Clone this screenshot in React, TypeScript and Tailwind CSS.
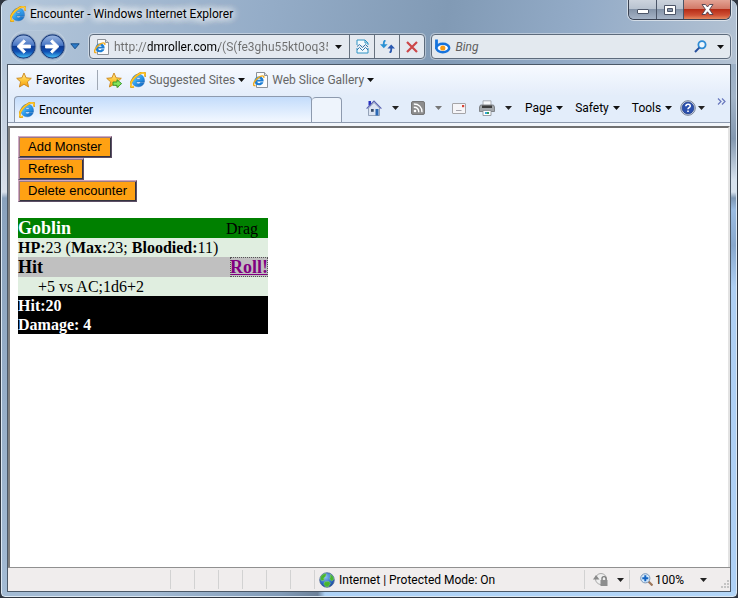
import type { ReactNode } from "react";

const ui = "font-[Roboto,'Open_Sans',sans-serif]";

function IeLogo({ size = 16 }: { size?: number }) {
  return (
    <svg width={size} height={size} viewBox="0 0 16 16" className="shrink-0" aria-hidden="true">
      <defs>
        <linearGradient id="ieBlue" x1="0" y1="0" x2="1" y2="1">
          <stop offset="0" stopColor="#8fe0fc" />
          <stop offset=".5" stopColor="#2b9cec" />
          <stop offset="1" stopColor="#0f5cb8" />
        </linearGradient>
      </defs>
      <path fillRule="evenodd" d="M14.500 9.900H6.400c.3 2.300 3.200 2.500 4 .7h3.900c-.9 2.900-3.500 4.200-6 4.200-3.800 0-6.300-2.500-6.300-6.200C2 5 4.600 2.300 8.300 2.300c4.200 0 6.600 3 6.200 7.600ZM10.500 7.300C10.300 5 6.700 5 6.400 7.300h4.100Z" fill="url(#ieBlue)" stroke="#1460b0" strokeWidth=".4" />
      <path d="M3.800 14.600C-.5 16.500-.4 11.700 3 7.200 6.600 2.500 12.600-.6 14.700 1c1 .8.700 2.200.2 3.600" fill="none" stroke="#d08f12" strokeWidth="2.200" />
      <path d="M3.800 14.500C-.3 16.100-.1 11.600 3.200 7.300 6.800 2.700 12.500-.3 14.500 1.200c.8.600.6 1.700.3 2.700" fill="none" stroke="#ffc928" strokeWidth="1.500" />
    </svg>
  );
}

function PageIcon() {
  return (
    <svg width="16" height="16" viewBox="0 0 16 16" className="shrink-0" aria-hidden="true">
      <path d="M3.500.5h8l3 3v12h-11Z" fill="#fcfcfc" stroke="#8c9299" />
      <path d="M11.500.5v3h3" fill="#ddd" stroke="#8c9299" />
      <path fillRule="evenodd" d="M10.600 9.500H4.300c.1 2 2.600 2.100 3.200.7h2.900c-.7 2.200-2.500 3.100-4.300 3.100-2.800 0-4.600-1.800-4.600-4.400 0-2.700 1.900-4.500 4.600-4.500 3 0 4.800 2 4.500 5.100ZM7.600 7.700C7.500 6.200 4.600 6.200 4.300 7.700Z" fill="#1d7ed4" />
      <path d="M2.500 13.500c-3 .8-2.400-2.400.1-5.200C5.200 5.200 9 3.100 10.500 4.200c.5.500.4 1 .2 1.700" fill="none" stroke="#efab1d" strokeWidth="1.400" />
    </svg>
  );
}

function Star({ add = false }: { add?: boolean }) {
  return (
    <svg width="16" height="16" viewBox="0 0 16 16" className="shrink-0" aria-hidden="true">
      <defs>
        <linearGradient id="starGold" x1="0" y1="0" x2="0" y2="1">
          <stop offset="0" stopColor="#ffe89a" />
          <stop offset=".5" stopColor="#ffc93a" />
          <stop offset="1" stopColor="#f39a12" />
        </linearGradient>
      </defs>
      <path d="m8 1 2.100 4.800 5.200.5-3.900 3.500 1.200 5.200L8 12.300 3.400 15l1.200-5.200L.7 6.300l5.200-.5Z" fill="url(#starGold)" stroke="#c98418" strokeWidth=".9" strokeLinejoin="round" />
      {add && <path d="M7 10h4V7.700l4.600 3.900-4.600 4V13.300H7Z" fill="#86e35c" stroke="#2c9224" strokeWidth=".9" />}
    </svg>
  );
}

function Caret({ color = "#111" }: { color?: string }) {
  return (
    <svg width="7" height="4" viewBox="0 0 7 4" className="shrink-0" aria-hidden="true">
      <path d="M0 0h7L3.500 4Z" fill={color} />
    </svg>
  );
}

function RoundArrow({ forward = false }: { forward?: boolean }) {
  return (
    <button type="button" aria-label={forward ? "Forward" : "Back"} className="shrink-0">
      <svg width="27" height="27" viewBox="0 0 27 27" className="block" aria-hidden="true">
        <defs>
          <linearGradient id="orbTop" x1="0" y1="0" x2="0" y2="1">
            <stop offset="0" stopColor="#9fb9e2" />
            <stop offset=".45" stopColor="#4675c4" />
            <stop offset=".5" stopColor="#0d3b94" />
            <stop offset=".72" stopColor="#1050b4" />
            <stop offset="1" stopColor="#49c6fb" />
          </linearGradient>
        </defs>
        <circle cx="13.500" cy="13.500" r="12.700" fill="#e3ecf6" stroke="#8095b3" strokeWidth=".8" />
        <circle cx="13.500" cy="13.500" r="11.600" fill="url(#orbTop)" stroke="#183b7c" strokeWidth="1.100" />
        <path
          d={forward ? "M6.500 12h8.200L11.500 8.500l1.700-1.700 6.800 6.700-6.800 6.700-1.700-1.700 3.200-3.500H6.500Z" : "M20.500 12h-8.200l3.200-3.500-1.700-1.700L7 13.500l6.800 6.700 1.700-1.700-3.200-3.500h8.200Z"}
          fill="#fff"
          stroke="#fff"
          strokeWidth=".8"
        />
      </svg>
    </button>
  );
}

function HomeIcon() {
  return (
    <svg width="16" height="16" viewBox="0 0 16 16" className="block" aria-hidden="true">
      <path d="M2.500 1h2.500v4.500H2.500Z" fill="#252fc0" />
      <path d="M2.500 8 8 2.500 13.500 8v7.500h-11Z" fill="#dce4f2" stroke="#8290a8" strokeWidth=".8" />
      <path d="M.6 8.700 8 1.200l7.400 7.500" fill="none" stroke="#5a62b0" strokeWidth="1.200" />
      <path d="M9.500 9h3v6.500h-3Z" fill="#2a68b5" />
      <path d="M5 9h2.700v2.800H5Z" fill="#394c68" />
    </svg>
  );
}

function RssIcon() {
  return (
    <svg width="14" height="14" viewBox="0 0 14 14" className="block" aria-hidden="true">
      <rect x=".5" y=".5" width="13" height="13" rx="1.500" fill="#8d8d8d" stroke="#777" />
      <circle cx="4" cy="10" r="1.300" fill="#fff" />
      <path d="M2.800 6.200c3 0 5 2 5 5M2.800 3c5 0 8.200 3.200 8.200 8.200" fill="none" stroke="#fff" strokeWidth="1.400" />
    </svg>
  );
}

function MailIcon() {
  return (
    <svg width="14" height="11" viewBox="0 0 14 11" className="block" aria-hidden="true">
      <rect x=".5" y=".5" width="13" height="10" rx=".5" fill="#f5f5f8" stroke="#a5a5a8" />
      <path d="M10 2h2.200v2.200H10Z" fill="#d84335" />
      <path d="M4 7.500h5.500" stroke="#a3a3ab" />
    </svg>
  );
}

function PrinterIcon() {
  return (
    <svg width="16" height="16" viewBox="0 0 16 16" className="block" aria-hidden="true">
      <path d="M4 .8h8V6H4Z" fill="#f7f9fb" stroke="#9a9ea4" strokeWidth=".8" />
      <path d="M1.500 5h13l1 2v4.500h-15V7Z" fill="#a3a7ab" stroke="#6e7276" strokeWidth=".8" />
      <path d="M3 5.500h10V8H3Z" fill="#3c3c3c" />
      <path d="M4 10.500h8v5H4Z" fill="#fff" stroke="#858a90" strokeWidth=".8" />
      <path d="M6 12h2v2H6Z" fill="#35a4dc" />
      <path d="M8 12h2v2H8Z" fill="#2f9e60" />
    </svg>
  );
}

function HelpIcon() {
  return (
    <svg width="16" height="16" viewBox="0 0 16 16" className="block" aria-hidden="true">
      <circle cx="8" cy="8" r="7.300" fill="#dbe2ee" stroke="#747f95" />
      <circle cx="8" cy="8" r="5.900" fill="#2b50ae" stroke="#1c3a82" strokeWidth=".7" />
      <path d="M5.800 6.300C6 3.500 10.400 3.600 10.200 6.200 10.100 7.700 8 7.600 8 9.300M8 10.400v1.700" fill="none" stroke="#fff" strokeWidth="1.600" />
    </svg>
  );
}

function GlobeIcon() {
  return (
    <svg width="16" height="16" viewBox="0 0 16 16" className="shrink-0" aria-hidden="true">
      <defs>
        <radialGradient id="sea" cx=".4" cy=".3" r=".8">
          <stop offset="0" stopColor="#8cc0f4" />
          <stop offset=".6" stopColor="#2b68c4" />
          <stop offset="1" stopColor="#173f8c" />
        </radialGradient>
      </defs>
      <circle cx="8" cy="8" r="7.300" fill="url(#sea)" stroke="#4c6898" strokeWidth=".8" />
      <path d="M2 4.500C3.600 2 6 1.300 7.400 2L6.500 4.500 4.700 6l.6 2-2.700.8C1.300 7.500 1.300 6 2 4.500ZM11 2.200c2.500 1 3.800 3.200 3.700 5.300l-2 1.500L10.500 7l1-2ZM5.800 9.800l4.200-.3 1.500 1.700-2 3.300-2.500.4-2.200-2.700Z" fill="#47b52f" stroke="#9ce279" strokeWidth=".4" />
    </svg>
  );
}

function TextMenu({ label }: { label: string }) {
  return (
    <button type="button" className="flex items-center gap-1">
      {label}
      <Caret />
    </button>
  );
}

function IconMenu({ label, children, caret = "#222" }: { label: string; children: ReactNode; caret?: string }) {
  return (
    <button type="button" aria-label={label} className="flex shrink-0 items-center gap-2.5">
      {children}
      <Caret color={caret} />
    </button>
  );
}

function WindowControls() {
  return (
    <div className="flex h-5 w-[103px] shrink-0 overflow-hidden rounded-b-md border border-t-0 border-[#3a4252] shadow-[0_0_0_1px_rgba(255,255,255,0.55)]">
      <button type="button" aria-label="Minimize" className="flex w-7 items-center justify-center border-r border-[#4b5568] bg-[linear-gradient(#ccd3dd_0%,#b9c3d0_45%,#8493a8_50%,#a5b3c6_100%)]">
        <svg width="12" height="5" viewBox="0 0 12 5" className="mt-1" aria-hidden="true"><rect x=".5" y=".5" width="11" height="4" rx=".5" fill="#fff" stroke="#4c5568" /></svg>
      </button>
      <button type="button" aria-label="Maximize" className="flex w-[27px] items-center justify-center border-r border-[#4b5568] bg-[linear-gradient(#ccd3dd_0%,#b9c3d0_45%,#8493a8_50%,#a5b3c6_100%)]">
        <svg width="12" height="10" viewBox="0 0 12 10" aria-hidden="true"><path fillRule="evenodd" d="M.5.5h11v9H.5ZM3.500 3.500v3h5v-3Z" fill="#fff" stroke="#4c5568" /></svg>
      </button>
      <button type="button" aria-label="Close" className="flex flex-1 items-center justify-center bg-[linear-gradient(#e3a394_0%,#d27a68_45%,#b62d17_50%,#cf5135_80%,#e48a60_100%)]">
        <svg width="13" height="11" viewBox="0 0 13 11" aria-hidden="true"><path d="M1 .5h3.500l2 2.500 2-2.500H12L8.500 5.500l3.500 5H8.500l-2-2.700-2 2.700H1l3.500-5Z" fill="#fff" stroke="#4c3f4d" strokeWidth=".9" /></svg>
      </button>
    </div>
  );
}

function TitleBar() {
  return (
    <header className="flex h-8 items-start justify-between">
      <div className="flex h-7 items-center gap-1 pl-[3px]">
        <IeLogo />
        <h1 className="text-xs text-black [text-shadow:0_0_8px_#fff,0_0_8px_#fff,0_0_10px_#fff,0_0_12px_#fff]">Encounter - Windows Internet Explorer</h1>
      </div>
      <WindowControls />
    </header>
  );
}

const navButton = "flex w-[25px] shrink-0 items-center justify-center border-l border-[#67727f]";

function NavigationBar() {
  return (
    <nav aria-label="Navigation" className="flex h-8 items-start gap-1.5 pl-[3px]">
      <div className="-mt-px flex w-[73px] shrink-0 items-center">
        <div className="flex gap-0.5 rounded-full bg-[#b3c3d5]/60 py-0.5 shadow-[0_0_1px_#fff]">
          <RoundArrow />
          <RoundArrow forward />
        </div>
        <button type="button" aria-label="Recent pages" className="ml-1">
          <svg width="10" height="7" viewBox="0 0 10 7" className="block" aria-hidden="true"><path d="M.8.800h8.400L5 5.800Z" fill="#2c7ccb" stroke="#194d86" /></svg>
        </button>
      </div>
      <div className="mt-0.5 flex h-[25px] min-w-0 flex-[336] rounded-sm border border-[#5d6b7c] bg-[#e4e9f0] shadow-[0_0_0_1px_rgba(255,255,255,0.4)]">
        <label className="flex min-w-0 flex-1 items-center gap-1 pl-1">
          <PageIcon />
          <input
            type="text"
            aria-label="Address"
            defaultValue="http://dmroller.com/(S(fe3ghu55kt0oq35"
            className="min-w-0 flex-1 bg-[linear-gradient(90deg,#6d6d6d_34px,#000_34px,#000_105px,#6d6d6d_105px)] bg-clip-text text-xs text-transparent outline-none"
          />
        </label>
        <button type="button" aria-label="Show address history" className="flex w-[21px] shrink-0 items-center justify-center">
          <Caret />
        </button>
        <button type="button" aria-label="Compatibility view" className={navButton}>
          <svg width="13" height="15" viewBox="0 0 13 15" aria-hidden="true">
            <path d="M1 6V1h8l3 3v2M1 9v5h11V9" fill="#f2f9fd" stroke="#2e93c4" />
            <path d="M9 1v3h3" fill="none" stroke="#2e93c4" />
            <path d="m1 7.500 2.500-2 3 3 3-3L12 8M1 11l2.500-2.500 3 3 3-3L12 11" fill="none" stroke="#3579ae" />
          </svg>
        </button>
        <button type="button" aria-label="Refresh page" className={navButton}>
          <svg width="15" height="13" viewBox="0 0 15 13" aria-hidden="true">
            <path d="M5.500.3C3.800.800 3.600 2.500 3.800 4.500M3.800 4V6" fill="none" stroke="#2a91d4" strokeWidth="1.800" />
            <path d="M0 4.300h7.600L3.800 8.300Z" fill="#2a91d4" />
            <path d="M9.500 12.700c1.700-.5 1.900-2.200 1.700-4.200M11.200 9V7" fill="none" stroke="#2b59b0" strokeWidth="1.800" />
            <path d="M7.400 8.500H15l-3.800-4Z" fill="#2b59b0" />
          </svg>
        </button>
        <button type="button" aria-label="Stop" className={navButton}>
          <svg width="12" height="12" viewBox="0 0 12 12" aria-hidden="true"><path d="m1 1 10 10M11 1 1 11" stroke="#cc4648" strokeWidth="2.200" /></svg>
        </button>
      </div>
      <div className="mt-0.5 flex h-[25px] min-w-0 flex-[299] items-center rounded-sm border border-[#5d6b7c] bg-[#e3e9ef] shadow-[0_0_0_1px_rgba(255,255,255,0.4)]">
        <svg width="17" height="15" viewBox="0 0 17 15" className="ml-0.5 shrink-0" aria-hidden="true">
          <path d="M2.500.5v9.500" stroke="#1673dc" strokeWidth="2.800" />
          <ellipse cx="8.800" cy="9" rx="6.400" ry="4.200" fill="#fff" stroke="#1673dc" strokeWidth="2.500" />
          <circle cx="8.800" cy="9" r="2.600" fill="#f79a13" />
        </svg>
        <input type="text" aria-label="Search" placeholder="Bing" className="ml-1 min-w-0 flex-1 text-xs text-black italic outline-none placeholder:text-[#5f5f5f]" />
        <button type="button" aria-label="Run search" className="shrink-0">
          <svg width="13" height="13" viewBox="0 0 13 13" className="block" aria-hidden="true">
            <circle cx="8" cy="4.800" r="3.600" fill="#eef7fd" stroke="#2d8bd4" strokeWidth="1.800" />
            <path d="M5.300 7.600 1 12" stroke="#274f9c" strokeWidth="2" />
          </svg>
        </button>
        <button type="button" aria-label="Search options" className="mr-1.5 ml-2.5 shrink-0">
          <Caret />
        </button>
      </div>
    </nav>
  );
}

function FavoritesBar() {
  return (
    <div className="flex h-[30px] items-center bg-linear-to-b from-[#f7faff] to-[#e4edfa] pl-2 text-[#666]">
      <button type="button" className="flex items-center gap-1 text-black">
        <Star />
        Favorites
      </button>
      <span className="mx-2 ml-3 h-5 border-l border-[#a0a8b4]" />
      <button type="button" aria-label="Add to favorites bar" className="mr-2">
        <Star add />
      </button>
      <button type="button" className="mr-2 flex items-center gap-[3px]">
        <IeLogo />
        Suggested Sites
        <Caret />
      </button>
      <button type="button" className="flex items-center gap-[3px]">
        <PageIcon />
        Web Slice Gallery
        <Caret />
      </button>
    </div>
  );
}

function TabRow() {
  return (
    <div className="flex h-7 items-end border-b border-[#8d9aae] bg-[#e3edfa] pl-1.5">
      <div role="tab" aria-selected="true" className="flex h-[26px] w-[298px] items-center gap-1 rounded-t-sm border border-b-0 border-[#8d9aae] bg-linear-to-b from-[#c3dcfb] to-[#f3f8ff] pl-1">
        <IeLogo />
        Encounter
      </div>
      <button type="button" aria-label="New tab" className="h-[25px] w-[30px] rounded-t-sm border border-b-0 border-l-0 border-[#8d9aae] bg-[#eef4fc]" />
      <div className="flex h-7 flex-1 items-center pl-6">
        <IconMenu label="Home"><HomeIcon /></IconMenu>
        <span className="w-3" />
        <IconMenu label="Feeds" caret="#777"><RssIcon /></IconMenu>
        <button type="button" aria-label="Read mail" className="mx-2.5"><MailIcon /></button>
        <span className="w-[3px]" />
        <IconMenu label="Print"><PrinterIcon /></IconMenu>
        <div className="ml-[13px] flex gap-3">
          <TextMenu label="Page" />
          <TextMenu label="Safety" />
          <TextMenu label="Tools" />
        </div>
        <button type="button" aria-label="Help" className="ml-2 flex items-center gap-0.5">
          <HelpIcon />
          <Caret color="#222" />
        </button>
        <button type="button" aria-label="More commands" className="mr-1 ml-auto self-start">
          <svg width="9" height="7" viewBox="0 0 9 7" className="mt-1 block" aria-hidden="true"><path d="m1 .5 3 3-3 3M5 .5l3 3-3 3" fill="none" stroke="#6877bd" strokeWidth="1.200" /></svg>
        </button>
      </div>
    </div>
  );
}

function OrangeButton({ children }: { children: ReactNode }) {
  return (
    <button type="button" className="h-[22px] border border-t-[#cfa9c4] border-r-[#5d4f66] border-b-[#5d4f66] border-l-[#cfa9c4] bg-[#ffa113] px-[9px] text-[13px] leading-5 text-black shadow-[inset_1px_1px_#9a7a80,inset_-1px_-1px_#333340]">
      {children}
    </button>
  );
}

function MonsterCard() {
  return (
    <article className="mt-4 w-[250px] bg-[#e0eee0] font-['Liberation_Serif',serif] text-base leading-[19px] text-black">
      <h2 className="flex h-5 items-center justify-between bg-[#008000] pr-2.5">
        <span className="text-lg leading-5 font-bold text-white">Goblin</span>
        <span>Drag</span>
      </h2>
      <p><b>HP:</b>23 (<b>Max:</b>23; <b>Bloodied:</b>11)</p>
      <h3 className="flex h-5 items-center justify-between bg-[#c0c0c0] text-lg leading-5 font-bold">
        <span>Hit</span>
        <a href="#roll" className="text-[#800080] underline outline-1 -outline-offset-1 outline-[#555] outline-dotted">Roll!</a>
      </h3>
      <p className="pl-5">+5 vs AC;1d6+2</p>
      <div className="bg-black font-bold text-white">
        <p>Hit:20</p>
        <p>Damage: 4</p>
      </div>
    </article>
  );
}

function StatusBar() {
  return (
    <footer className="flex h-[23px] items-center bg-[#f0eded] py-0.5 text-xs">
      <span className="w-[162px] shrink-0" />
      {[0, 1, 2, 3, 4, 5].map((cell) => (
        <span key={cell} className="h-full w-6 shrink-0 border-l border-[#d2d2d2]" />
      ))}
      <div className="flex h-full min-w-0 flex-1 items-center gap-1 border-l border-[#d2d2d2] pl-1 whitespace-nowrap">
        <GlobeIcon />
        Internet | Protected Mode: On
      </div>
      <button type="button" aria-label="Privacy" className="flex h-full w-[45px] items-center justify-between border-l border-[#d2d2d2] pr-[5px] pl-2">
        <svg width="16" height="15" viewBox="0 0 16 15" aria-hidden="true">
          <circle cx="8" cy="7" r="5.500" fill="#eee" stroke="#aaa" />
          <path d="M0 7.500 3 3l3.500 4.500Z" fill="#8a8a8a" />
          <path d="M9 8V6.500c0-2.500 4-2.500 4 0V8" fill="none" stroke="#777" strokeWidth="1.300" />
          <path d="M7.500 8h7v6h-7Z" fill="#8d8d8d" />
        </svg>
        <Caret color="#222" />
      </button>
      <button type="button" className="flex h-full w-[92px] items-center border-l border-[#d2d2d2] pl-2.5">
        <svg width="13" height="13" viewBox="0 0 13 13" className="mr-0.5" aria-hidden="true">
          <path d="m8.500 8.500 4 4" stroke="#9c765a" strokeWidth="2.200" />
          <circle cx="5.300" cy="5.300" r="4.600" fill="#d5e9fb" stroke="#7d97b7" />
          <path d="M5.300 2.300v6M2.300 5.300h6" stroke="#1665c2" strokeWidth="2" />
        </svg>
        100%
        <span className="ml-4"><Caret color="#222" /></span>
      </button>
      <svg width="9" height="9" viewBox="0 0 9 9" className="shrink-0 self-end" aria-hidden="true">
        <path d="M6 0h2v2H6ZM3 3h2v2H3ZM6 3h2v2H6ZM0 6h2v2H0ZM3 6h2v2H3ZM6 6h2v2H6Z" fill="#c4c4c4" />
      </svg>
    </footer>
  );
}

export default function App() {
  return (
    <div className={`${ui} flex h-screen flex-col overflow-hidden bg-[#2f3640] text-xs text-black`}>
      <div className="m-px flex min-h-0 flex-1 flex-col rounded-t-md rounded-b-sm border border-[#dce8f3] bg-[linear-gradient(90deg,#a3bbd4_0%,#a3bbd4_20%,#819bb8_38%,#6c8199_43%,#aed2f6_44%,#b3d6f8_100%),linear-gradient(#b4c5d8_10%,#d9e0ea_32%,#8aa2bd_33%,#a3bbd4_100%),linear-gradient(#8fa7c0_0%,#a3b5c9_16%,#8398b0_23%,#d7e2ee_30%,#d7e2ee_32%,#7d97b4_33%,#9bbce2_35%,#88a8cd_41%,#aecff3_48%,#aed0f5_100%)] bg-size-[100%_5px,7px_100%,100%_100%] bg-position-[left_bottom,left_top,left_top] bg-no-repeat px-[5px] pb-1">
        <div className="-mx-[5px] -mt-0.5 rounded-t-md bg-[linear-gradient(100deg,#b4c7db_0%,#95adc8_35%,#819ab5_60%,#93abc7_78%,#b3c2d3_100%)] px-[5px]">
          <TitleBar />
          <NavigationBar />
        </div>
        <main className="flex min-h-0 flex-1 flex-col border border-[#4b5867]">
          <FavoritesBar />
          <TabRow />
          <div className="h-[3px] bg-[#f2f6fb]" />
          <section aria-label="Page" className="min-h-0 flex-1 border-t-2 border-r-2 border-l-2 border-t-[#707070] border-r-[#e3e3e3] border-l-[#808080] bg-white px-2 py-2 font-['Liberation_Sans',Arial,sans-serif]">
            <div className="flex flex-col items-start">
              <OrangeButton>Add Monster</OrangeButton>
              <OrangeButton>Refresh</OrangeButton>
              <OrangeButton>Delete encounter</OrangeButton>
            </div>
            <MonsterCard />
          </section>
          <div className="border-t border-[#909090]">
            <StatusBar />
          </div>
        </main>
      </div>
    </div>
  );
}
